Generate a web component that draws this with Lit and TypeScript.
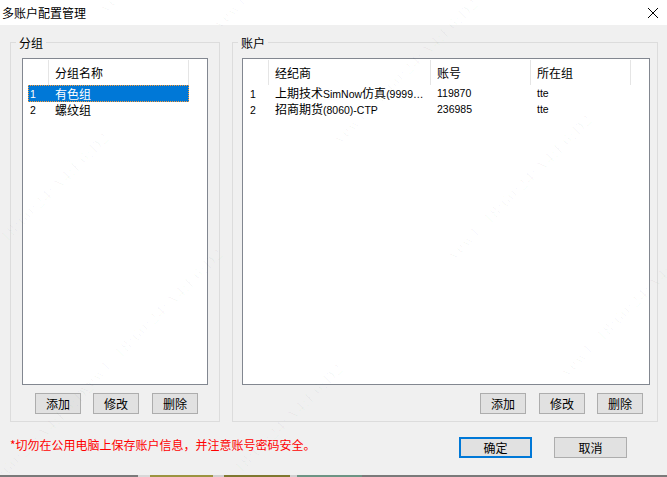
import { LitElement, html, css } from "lit";
import { customElement } from "lit/decorators.js";

const WM: [number, number][] = [
  [-140, 165], [-26, 281], [88, 397], [109, 16], [223, 32], [208, 512], [343, 147], [457, 263], [570, 380], [-41, 530],
];

@customElement("app-root")
export class AppRoot extends LitElement {
  static styles = css`
    :host {
      display: block;
      position: relative;
      width: 667px;
      height: 477px;
      overflow: hidden;
      font-family: "Noto Sans CJK SC", sans-serif;
      font-size: 12px;
      line-height: 17px;
      color: #000;
      background: #f0f0f0;
    }
    .window { display: flex; flex-direction: column; height: 477px; }
    .title {
      flex: none;
      height: 25px;
      background: #fff;
      display: flex;
      align-items: center;
      justify-content: space-between;
      padding: 0 9px 0 2px;
      box-sizing: border-box;
    }
    .title svg { display: block; }
    .body { flex: 1; min-height: 0; display: flex; flex-direction: column; padding: 0 9px 0 10px; }
    .panes { display: flex; gap: 12px; margin-top: 17px; height: 380px; }
    .pane {
      box-sizing: border-box;
      height: 380px;
      border: 1px solid #dcdcdc;
      display: flex;
      flex-direction: column;
      padding: 15px 11px 7px 11px;
      position: relative;
    }
    .pane.left { width: 210px; }
    .pane.right { width: 426px; padding-left: 9px; padding-right: 7px; }
    .legend {
      position: absolute;
      top: -9px;
      left: 5px;
      padding: 0 3px;
      background: #f0f0f0;
    }
    .list {
      box-sizing: border-box;
      height: 327px;
      border: 1px solid #828790;
      background: #fff;
      flex: none;
    }
    .head { display: flex; height: 25px; margin-top: 1px; }
    .head .c { border-right: 1px solid #e5e5e5; display: flex; align-items: center; padding-left: 6px; box-sizing: border-box; padding-bottom: 1px; }
    .row { display: flex; height: 17px; align-items: center; box-sizing: border-box; }
    .row .c { padding-left: 6px; box-sizing: border-box; white-space: nowrap; }
    .left .c0 { width: 26px; }
    .left .c1 { width: 140px; }
    .left .row { margin-left: 5px; width: 161px; }
    .left .row .c0 { width: 21px; padding-left: 2px; }
    .left .row .c1 { width: 140px; padding-left: 6px; }
    .right .c0 { width: 26px; }
    .right .c1 { width: 162px; }
    .right .c2, .right .c3 { width: 100px; }
    .right .row .c0 { padding-left: 7px; }
    .row.sel { background: #0078d7; color: #fff; outline: 1px dotted #ff9a33; outline-offset: -1px; }
    .rows .row:nth-child(2) { line-height: 15px; padding-bottom: 2px; }
    .lat { font-family: "Liberation Sans", sans-serif; font-size: 10.5px; }
    .btns { display: flex; margin-top: 8px; }
    .left .btns { gap: 12px; padding-left: 13px; }
    .left .btns .btn:last-child { margin-left: 1px; }
    .right .btns { justify-content: flex-end; gap: 13px; padding-right: 7px; }
    .right .btns .btn:last-child { margin-left: -1px; }
    .btn {
      box-sizing: border-box;
      width: 46px;
      height: 21px;
      border: 1px solid #adadad;
      background: #e1e1e1;
      display: flex;
      align-items: center;
      justify-content: center;
    }
    .foot { display: flex; align-items: center; margin-top: 14px; height: 22px; }
    .warn { color: #f00; width: 449px; padding-bottom: 6px; }
    .foot .btn { width: 73px; height: 21px; }
    .foot .btn.primary { border: 2px solid #0078d7; margin-right: 22px; }
    .strip { flex: none; height: 2px; background: #7a7a7a; display: flex; }
    .strip i { display: block; height: 2px; }
    .s0 { width: 138px; }
    .s1 { width: 5px; background: #d8d8d8; }
    .s2 { width: 7px; background: #d8d8d8; }
    .s3 { width: 63px; background: #9c9440; }
    .s4 { width: 11px; background: #d0d0d0; }
    .s5 { width: 66px; background: #7f7830; }
    .s6 { width: 7px; background: #d0d0d0; }
    .s7 { width: 65px; background: #6d9484; }
    .wm {
      position: absolute;
      transform-origin: 0 100%;
      transform: rotate(-45deg);
      font-family: "Liberation Serif", serif;
      font-size: 16px;
      line-height: 18px;
      letter-spacing: 1.2px;
      white-space: pre;
      color: rgba(0, 0, 0, 0.03);
      pointer-events: none;
    }
  `;

  private buttons() {
    return html`<div class="btns">
      <div class="btn">添加</div>
      <div class="btn">修改</div>
      <div class="btn">删除</div>
    </div>`;
  }

  render() {
    return html`
      <div class="window">
        <div class="title">
          <span>多账户配置管理</span>
          <svg width="10" height="10" viewBox="0 0 10 10"><path d="M0 0L10 10M10 0L0 10" stroke="#000" stroke-width="1" fill="none"/></svg>
        </div>
        <div class="body">
          <div class="panes">
            <div class="pane left">
              <div class="legend">分组</div>
              <div class="list">
                <div class="head">
                  <div class="c c0"></div>
                  <div class="c c1">分组名称</div>
                </div>
                <div class="rows">
                  <div class="row sel"><div class="c c0"><span class="lat">1</span></div><div class="c c1">有色组</div></div>
                  <div class="row"><div class="c c0"><span class="lat">2</span></div><div class="c c1">螺纹组</div></div>
                </div>
              </div>
              ${this.buttons()}
            </div>
            <div class="pane right">
              <div class="legend">账户</div>
              <div class="list">
                <div class="head">
                  <div class="c c0"></div>
                  <div class="c c1">经纪商</div>
                  <div class="c c2">账号</div>
                  <div class="c c3">所在组</div>
                </div>
                <div class="rows">
                  <div class="row"><div class="c c0"><span class="lat">1</span></div><div class="c c1">上期技术<span class="lat">SimNow</span>仿真<span class="lat">(9999…</span></div><div class="c c2 lat">119870</div><div class="c c3 lat">tte</div></div>
                  <div class="row"><div class="c c0"><span class="lat">2</span></div><div class="c c1">招商期货<span class="lat">(8060)-CTP</span></div><div class="c c2 lat">236985</div><div class="c c3 lat">tte</div></div>
                </div>
              </div>
              ${this.buttons()}
            </div>
          </div>
          <div class="foot">
            <div class="warn">*切勿在公用电脑上保存账户信息，并注意账号密码安全。</div>
            <div class="btn primary">确定</div>
            <div class="btn">取消</div>
          </div>
        </div>
        <div class="strip">
          <i class="s0"></i><i class="s1"></i><i class="s2"></i><i class="s3"></i><i class="s4"></i><i class="s5"></i><i class="s6"></i><i class="s7"></i>
        </div>
      </div>
      ${WM.map(([x, y]) => html`<div class="wm" style="left:${x}px;top:${y - 18}px">yew1  18:60:24:A4:E6:D2</div>`)}
    `;
  }
}
